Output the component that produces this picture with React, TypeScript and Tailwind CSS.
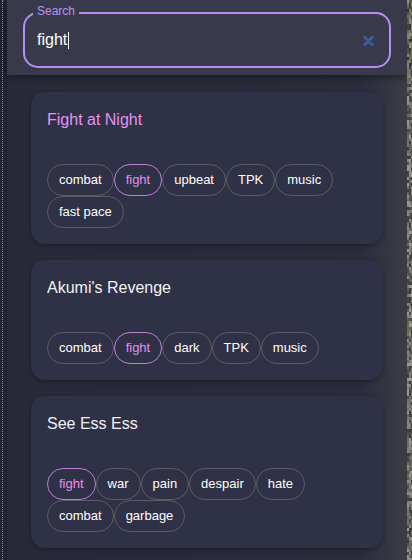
import React from "react";

type Item = { title: string; tags: string[]; hl?: boolean };

const items: Item[] = [
  { title: "Fight at Night", tags: ["combat", "fight", "upbeat", "TPK", "music", "fast pace"], hl: true },
  { title: "Akumi's Revenge", tags: ["combat", "fight", "dark", "TPK", "music"] },
  { title: "See Ess Ess", tags: ["fight", "war", "pain", "despair", "hate", "combat", "garbage"] },
];

function Texture() {
  const colors = ["#6d6b58", "#4f4d43", "#85836f", "#3b3a34", "#9a9886", "#5d604c", "#737766", "#46463e", "#8f8c7a"];
  let seed = 7;
  const rnd = () => {
    seed = (seed * 9301 + 49297) % 233280;
    return seed / 233280;
  };
  const rects: React.ReactNode[] = [];
  for (let y = 0; y < 560; y += 3) {
    for (let x = 0; x < 5; x += 2) {
      rects.push(
        <rect key={`${x}-${y}`} x={x} y={y} width={2} height={3} fill={colors[Math.floor(rnd() * colors.length)]} />
      );
    }
  }
  return (
    <svg width="5" height="560" viewBox="0 0 5 560" className="block">
      {rects}
    </svg>
  );
}

function Chip({ label, active }: { label: string; active: boolean }) {
  return (
    <span
      className={
        active
          ? "h-8 flex items-center px-[11px] rounded-full border border-[#c27cd8] text-[#e48ff3] text-[13px] leading-4"
          : "h-8 flex items-center px-[11px] rounded-full border border-[#5d5c62] text-white text-[13px] leading-4"
      }
    >
      {label}
    </span>
  );
}

export default function App() {
  return (
    <div className="w-[412px] h-[560px] flex overflow-hidden bg-[#282a39] font-['Liberation_Sans',Arial,sans-serif]">
      <div className="w-[7px] h-full bg-[#212331] flex">
        <div className="ml-[2px] h-full border-l border-dotted border-[#8d8f9c]" />
      </div>
      <div className="flex-1 flex flex-col bg-gradient-to-r from-[#282a39] via-[#2a2c3b] via-[88%] to-[#3c3d44]">
        <div className="h-[75px] bg-[#383a4c] shadow-[0_3px_6px_rgba(0,0,0,0.35)] px-4 pt-3 relative z-10">
          <div className="relative h-[56px] rounded-[15px] border-2 border-[#b48ff2] flex items-center justify-between pl-3 pr-[15px]">
            <span className="absolute left-[8px] top-[-9px] px-1 bg-[#383a4c] text-[12px] leading-[12px] text-[#b794f6]">
              Search
            </span>
            <div className="flex items-center text-white text-[16px] leading-5">
              <span>fight</span>
              <span className="w-px h-[17px] bg-white ml-px" />
            </div>
            <svg width="11" height="10" viewBox="0 0 11 10" className="mt-[2px]">
              <path d="M1.5 1 L9.5 9 M9.5 1 L1.5 9" stroke="#3a5fa2" strokeWidth="2.6" strokeLinecap="round" />
            </svg>
          </div>
        </div>
        <div className="px-6 pt-[17px] flex flex-col gap-4">
          {items.map((it) => (
            <div
              key={it.title}
              className="rounded-[14px] bg-[#2f3146] p-4 shadow-[0_2px_5px_rgba(0,0,0,0.3)]"
            >
              <div className={it.hl ? "text-[16px] leading-6 text-[#e592f3]" : "text-[16px] leading-6 text-[#f2f2f4]"}>
                {it.title}
              </div>
              <div className="mt-8 flex flex-wrap">
                {it.tags.map((t, i) => (
                  <Chip key={i} label={t} active={t === "fight"} />
                ))}
              </div>
            </div>
          ))}
        </div>
      </div>
      <div className="w-[5px] h-full">
        <Texture />
      </div>
    </div>
  );
}
